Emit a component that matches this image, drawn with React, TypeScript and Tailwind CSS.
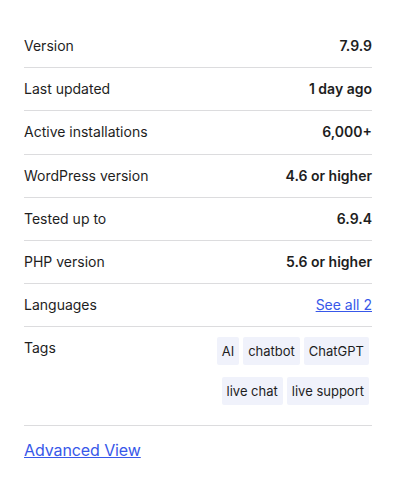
import React from "react";

const rows: { label: string; value: string; link?: boolean }[] = [
  { label: "Version", value: "7.9.9" },
  { label: "Last updated", value: "1 day ago" },
  { label: "Active installations", value: "6,000+" },
  { label: "WordPress version", value: "4.6 or higher" },
  { label: "Tested up to", value: "6.9.4" },
  { label: "PHP version", value: "5.6 or higher" },
  { label: "Languages", value: "See all 2", link: true },
];

const tags = ["AI", "chatbot", "ChatGPT", "live chat", "live support"];

export default function App() {
  return (
    <div
      className="w-[396px] h-[497px] bg-white px-6 pt-[25px] text-[#1e1e1e]"
      style={{ fontFamily: "Inter, 'Noto Sans', sans-serif" }}
    >
      {rows.map((r) => (
        <div
          key={r.label}
          className="flex justify-between items-center py-3 border-b border-[#dcdcde] text-[14px] leading-[1.3]"
        >
          <span>{r.label}</span>
          {r.link ? (
            <a href="#" className="text-[#3858e9] underline">
              {r.value}
            </a>
          ) : (
            <span className="font-semibold">{r.value}</span>
          )}
        </div>
      ))}
      <div className="flex justify-between items-start border-b border-[#dcdcde] text-[14px] leading-[1.3]">
        <span className="py-3">Tags</span>
        <div className="flex flex-wrap justify-end gap-x-1 gap-y-3 pt-[10px] pb-[20px] pr-[3px] max-w-[170px]">
          {tags.map((t) => (
            <span
              key={t}
              className="bg-[#f0f2fb] rounded-[2px] px-[5px] py-[5px] text-[13px] leading-[18px]"
            >
              {t}
            </span>
          ))}
        </div>
      </div>
      <div className="pt-[12px]">
        <a href="#" className="text-[#3858e9] underline text-[16px] leading-[24px] tracking-[-0.1px]">
          Advanced View
        </a>
      </div>
    </div>
  );
}
